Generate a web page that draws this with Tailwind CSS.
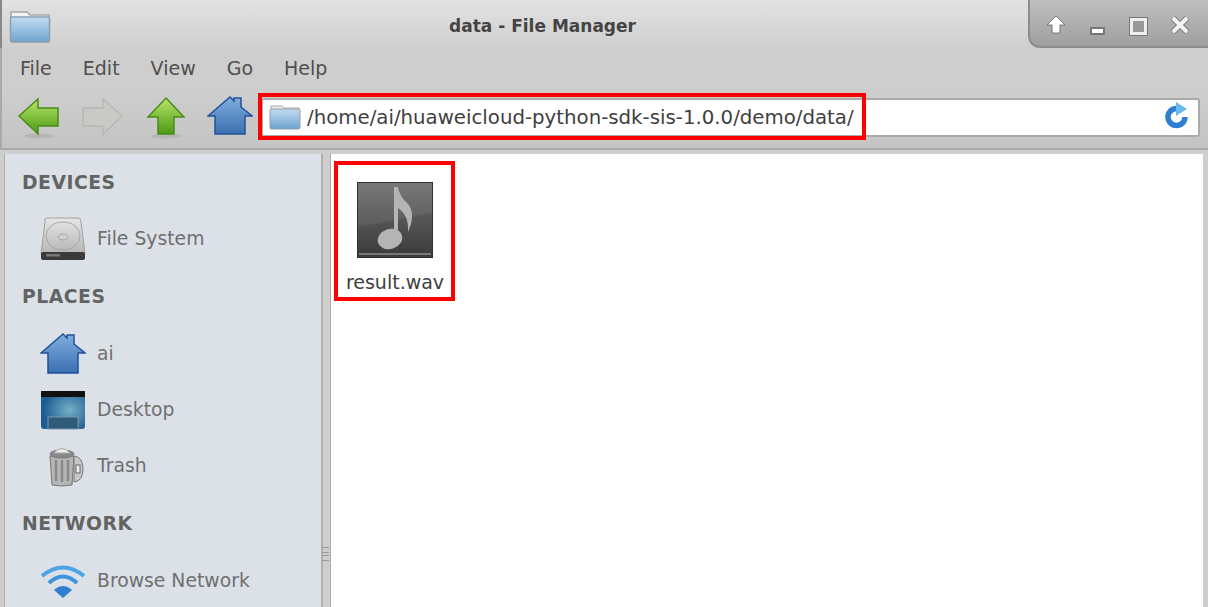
<!DOCTYPE html>
<html lang="en">
<head>
  <meta charset="UTF-8" />
  <title>data - File Manager</title>
  <script src="https://cdn.jsdelivr.net/npm/@tailwindcss/browser@4"></script>
</head>
<body class="bg-[#cfcfcf]">
  <div class="relative w-[1208px] h-[607px] overflow-hidden flex flex-col bg-[#cecece] font-['DejaVu_Sans',sans-serif] text-[#4a4a4a]">

    <!-- title bar -->
    <div class="relative h-[48px] shrink-0 flex items-center justify-center pr-[125px] bg-gradient-to-b from-[#e2e2e2] to-[#cfcfcf] border-l-2 border-[#888]">
      <svg class="absolute left-[6px] top-[9px]" width="44" height="35" viewBox="0 0 44 35">
        <defs><linearGradient id="fold" x1="0" y1="0" x2="0" y2="1"><stop offset="0" stop-color="#c3dcf0"/><stop offset="1" stop-color="#6ea3cd"/></linearGradient></defs>
        <path d="M3 3h16l3 3h19v8H3z" fill="#f4f4f4" stroke="#a8a8a8" stroke-width="1.5"/>
        <rect x="2.500" y="8" width="39" height="25" rx="1.500" fill="url(#fold)" stroke="#8a9fb0" stroke-width="1.500"/>
      </svg>
      <span class="text-[17px] font-bold text-[#444] mt-[6px]">data - File Manager</span>
      <div class="absolute right-0 top-0 w-[180px] h-[48px] rounded-bl-[12px] bg-gradient-to-b from-[#bfbfbf] to-[#9f9f9f] border-l-2 border-b-2 border-[#8d8d8d]">
        <svg class="absolute left-[16px] top-[15px]" width="20" height="20" viewBox="0 0 20 20"><path d="M10 1 19 10H14V18H6V10H1Z" fill="#fff" stroke="#777" stroke-width="1" stroke-linejoin="round"/></svg>
        <div class="absolute left-[60px] top-[27px] w-[15px] h-[8px] bg-white border-2 border-[#777]"></div>
        <div class="absolute left-[100px] top-[18px] w-[17px] h-[17px] border-[3px] border-[#eee] outline outline-1 outline-[#777] bg-[#999]"></div>
        <svg class="absolute left-[140px] top-[15px]" width="20" height="20" viewBox="0 0 20 20"><path d="M3 3 17 17M17 3 3 17" stroke="#777" stroke-width="6"/><path d="M3 3 17 17M17 3 3 17" stroke="#f4f4f4" stroke-width="4"/></svg>
      </div>
    </div>

    <!-- menu bar -->
    <div class="h-[40px] shrink-0 flex items-center gap-[31px] pl-[18px] pt-[1px] text-[19px] text-[#4f4f4f] border-l-2 border-[#aaa]">
      <span>File</span><span>Edit</span><span>View</span><span>Go</span><span>Help</span>
    </div>

    <!-- toolbar -->
    <div class="relative h-[60px] shrink-0 flex items-center pl-[16px] pr-[8px] bg-gradient-to-b from-[#cecece] to-[#c4c4c4] border-l-2 border-[#aaa]">
      <svg width="42" height="44" viewBox="0 0 42 44" class="shrink-0">
        <defs><linearGradient id="gr" x1="0" y1="0" x2="0" y2="1"><stop offset="0" stop-color="#b7e56a"/><stop offset="1" stop-color="#4d9a14"/></linearGradient></defs>
        <ellipse cx="21" cy="40" rx="15" ry="2.500" fill="#000" opacity="0.080"/>
        <path d="M1 20 20 3V12H40V30H20V38Z" fill="url(#gr)" stroke="#4a8c18" stroke-width="1.500"/>
      </svg>
      <svg width="42" height="44" viewBox="0 0 42 44" class="shrink-0 ml-[21px]">
        <path d="M41 20 22 3V12H2V30H22V38Z" fill="#c9c9c6" stroke="#b7b7b4" stroke-width="1.500"/>
      </svg>
      <svg width="40" height="44" viewBox="0 0 40 44" class="shrink-0 ml-[23px]">
        <ellipse cx="20" cy="40" rx="15" ry="2.500" fill="#000" opacity="0.080"/>
        <path d="M20 2 38 21H28V38H12V21H2Z" fill="url(#gr)" stroke="#4a8c18" stroke-width="1.500"/>
      </svg>
      <svg width="46" height="44" viewBox="0 0 46 44" class="shrink-0 ml-[21px]">
        <defs><linearGradient id="bl" x1="0" y1="0" x2="0" y2="1"><stop offset="0" stop-color="#80aede"/><stop offset="1" stop-color="#3b6fb0"/></linearGradient></defs>
        <path d="M1 20 23 1 27 5V2H34V11L45 20H38V38H8V20Z" fill="url(#bl)" stroke="#1f5299" stroke-width="1.500"/>
      </svg>
      <!-- address bar -->
      <div class="ml-[8px] flex-1 h-[39px] -mt-[2px] bg-white border-2 border-[#aaa] rounded-[3px] flex items-center pl-[6px] pr-[8px]">
        <svg width="32" height="26" viewBox="0 0 32 26" class="shrink-0">
          <path d="M2 2h11l2 2h15v6H2z" fill="#eee" stroke="#a8a8a8"/>
          <rect x="1" y="5" width="30" height="20" rx="1.500" fill="url(#fold)" stroke="#8a9fb0"/>
        </svg>
        <span class="ml-[6px] mt-[2px] text-[19.750px] text-[#3f3f3f] whitespace-nowrap">/home/ai/huaweicloud-python-sdk-sis-1.0.0/demo/data/</span>
        <svg width="26" height="30" viewBox="0 0 26 30" class="ml-auto shrink-0">
          <path d="M21 15A8.500 8.500 0 1 1 12.500 6.500" fill="none" stroke="#2f7fd0" stroke-width="5.500"/>
          <path d="M12 0 23 7 12 14Z" fill="#69b9ec"/>
        </svg>
      </div>
    </div>

    <!-- main -->
    <div class="flex-1 min-h-0 flex pt-[4px] pl-[4px] pr-[5px] border-t-2 border-[#a8a8a8]">
      <aside class="relative w-[319px] shrink-0 bg-[#dce1e8] border-l border-r-2 border-[#b0b0b0] pl-[17px] text-[18.800px] text-[#6f6f6f]">
        <h2 class="h-[28px] mt-[15px] text-[18.800px] font-bold tracking-[0.5px] text-[#636363]">DEVICES</h2>
        <div class="h-[48px] mt-[18px] flex items-center">
          <svg width="46" height="46" viewBox="0 0 46 46" class="ml-[18px] shrink-0">
            <defs><linearGradient id="hd" x1="0" y1="0" x2="0" y2="1"><stop offset="0" stop-color="#e6e6e6"/><stop offset="1" stop-color="#b5b5b5"/></linearGradient></defs>
            <path d="M6 2H38Q41 2 41 6L45 38H1L5 6Q5 2 6 2Z" fill="url(#hd)" stroke="#a0a0a0"/>
            <ellipse cx="23" cy="20" rx="17" ry="14" fill="none" stroke="#a5a5a5"/>
            <ellipse cx="23" cy="21" rx="5" ry="3" fill="#d0d0d0" stroke="#a5a5a5"/>
            <rect x="1" y="36" width="44" height="8" rx="2" fill="#3a3a3a"/>
            <rect x="6" y="38" width="14" height="2.500" fill="#777"/>
          </svg>
          <span class="ml-[11px]">File System</span>
        </div>
        <h2 class="h-[28px] mt-[20px] text-[18.800px] font-bold tracking-[0.5px] text-[#636363]">PLACES</h2>
        <div class="h-[48px] mt-[19px] flex items-center">
          <svg width="46" height="44" viewBox="0 0 46 44" class="ml-[18px] shrink-0">
            <path d="M1 21 23 2 27 6V3H34V12L45 21H38V41H8V21Z" fill="url(#bl)" stroke="#1f5299" stroke-width="1.500"/>
          </svg>
          <span class="ml-[11px]">ai</span>
        </div>
        <div class="h-[48px] mt-[8px] flex items-center">
          <svg width="46" height="40" viewBox="0 0 46 40" class="ml-[18px] shrink-0">
            <defs><radialGradient id="dk" cx="0.650" cy="0.500" r="0.600"><stop offset="0" stop-color="#74b0c4"/><stop offset="1" stop-color="#1f5c94"/></radialGradient></defs>
            <rect x="1" y="1" width="44" height="38" rx="3" fill="url(#dk)"/>
            <rect x="1" y="1" width="44" height="6" fill="#111"/>
            <rect x="8" y="27" width="30" height="12" fill="#2f5a78" stroke="#789ab0"/>
          </svg>
          <span class="ml-[11px]">Desktop</span>
        </div>
        <div class="h-[48px] mt-[8px] flex items-center">
          <svg width="36" height="42" viewBox="0 0 36 42" class="ml-[26px] shrink-0">
            <path d="M2 11H26L24 40Q14 42 4 40Z" fill="#b5b5b5" stroke="#777"/>
            <ellipse cx="14" cy="9" rx="12" ry="4" fill="#8a8a8a" stroke="#777"/>
            <path d="M6 8Q14 -1 22 8Z" fill="#ececec" stroke="#aaa"/>
            <path d="M8 15V36M14 15V37M20 15V36" stroke="#8a8a8a" stroke-width="2.500"/>
            <path d="M26 11Q35 12 35 24T26 37Z" fill="#c8c8c8" stroke="#777"/>
            <rect x="28" y="20" width="4" height="8" fill="#eee" stroke="#666"/>
          </svg>
          <span class="ml-[13px]">Trash</span>
        </div>
        <h2 class="h-[28px] mt-[20px] text-[18.800px] font-bold tracking-[0.5px] text-[#636363]">NETWORK</h2>
        <div class="h-[48px] mt-[19px] flex items-center">
          <svg width="46" height="36" viewBox="0 0 46 36" class="ml-[18px] shrink-0">
            <path d="M2 13Q23 -4 44 13" fill="none" stroke="#4da3e6" stroke-width="4"/>
            <path d="M9 20Q23 7 37 20" fill="none" stroke="#3d94de" stroke-width="4"/>
            <path d="M23 35 14 27Q23 19 32 27Z" fill="#2f7fd0"/>
          </svg>
          <span class="ml-[11px]">Browse Network</span>
        </div>
        <div class="absolute -right-[8px] top-[393px] w-[7px] h-[14px] border-y border-[#999] flex items-center"><div class="w-full h-[4px] border-y border-[#999]"></div></div>
      </aside>

      <!-- file view -->
      <main class="flex-1 ml-[7px] bg-white border-l border-[#aaa] pl-[5px] pt-[28px]">
        <div class="w-[118px] flex flex-col items-center">
          <svg width="76" height="76" viewBox="0 0 76 76">
            <defs><linearGradient id="mu" x1="0" y1="0" x2="0" y2="1"><stop offset="0" stop-color="#6e6e6e"/><stop offset="1" stop-color="#3a3a3a"/></linearGradient></defs>
            <rect x="0.500" y="0.500" width="75" height="75" fill="url(#mu)" stroke="#2f2f2f"/>
            <path d="M1 45 75 31V1H1Z" fill="#fff" opacity="0.070"/>
            <rect x="2" y="71" width="72" height="2" fill="#777"/>
            <ellipse cx="33" cy="57" rx="12.500" ry="10" fill="#b4b4b4" transform="rotate(-18 33 57)"/>
            <path d="M37 5h4v52h-4z" fill="#b4b4b4"/>
            <path d="M41 6Q43 15 51 22Q59 32 51 50Q52 33 41 26Z" fill="#b4b4b4"/>
          </svg>
          <span class="mt-[10px] text-[19px] leading-[28px] text-[#3f3f3f]">result.wav</span>
        </div>
      </main>
    </div>

    <!-- annotation boxes -->
    <div class="absolute left-[258px] top-[93px] w-[608px] h-[47px] border-[4px] border-[#f00]"></div>
    <div class="absolute left-[334px] top-[161px] w-[121px] h-[140px] border-[4px] border-[#f00]"></div>
  </div>
</body>
</html>
